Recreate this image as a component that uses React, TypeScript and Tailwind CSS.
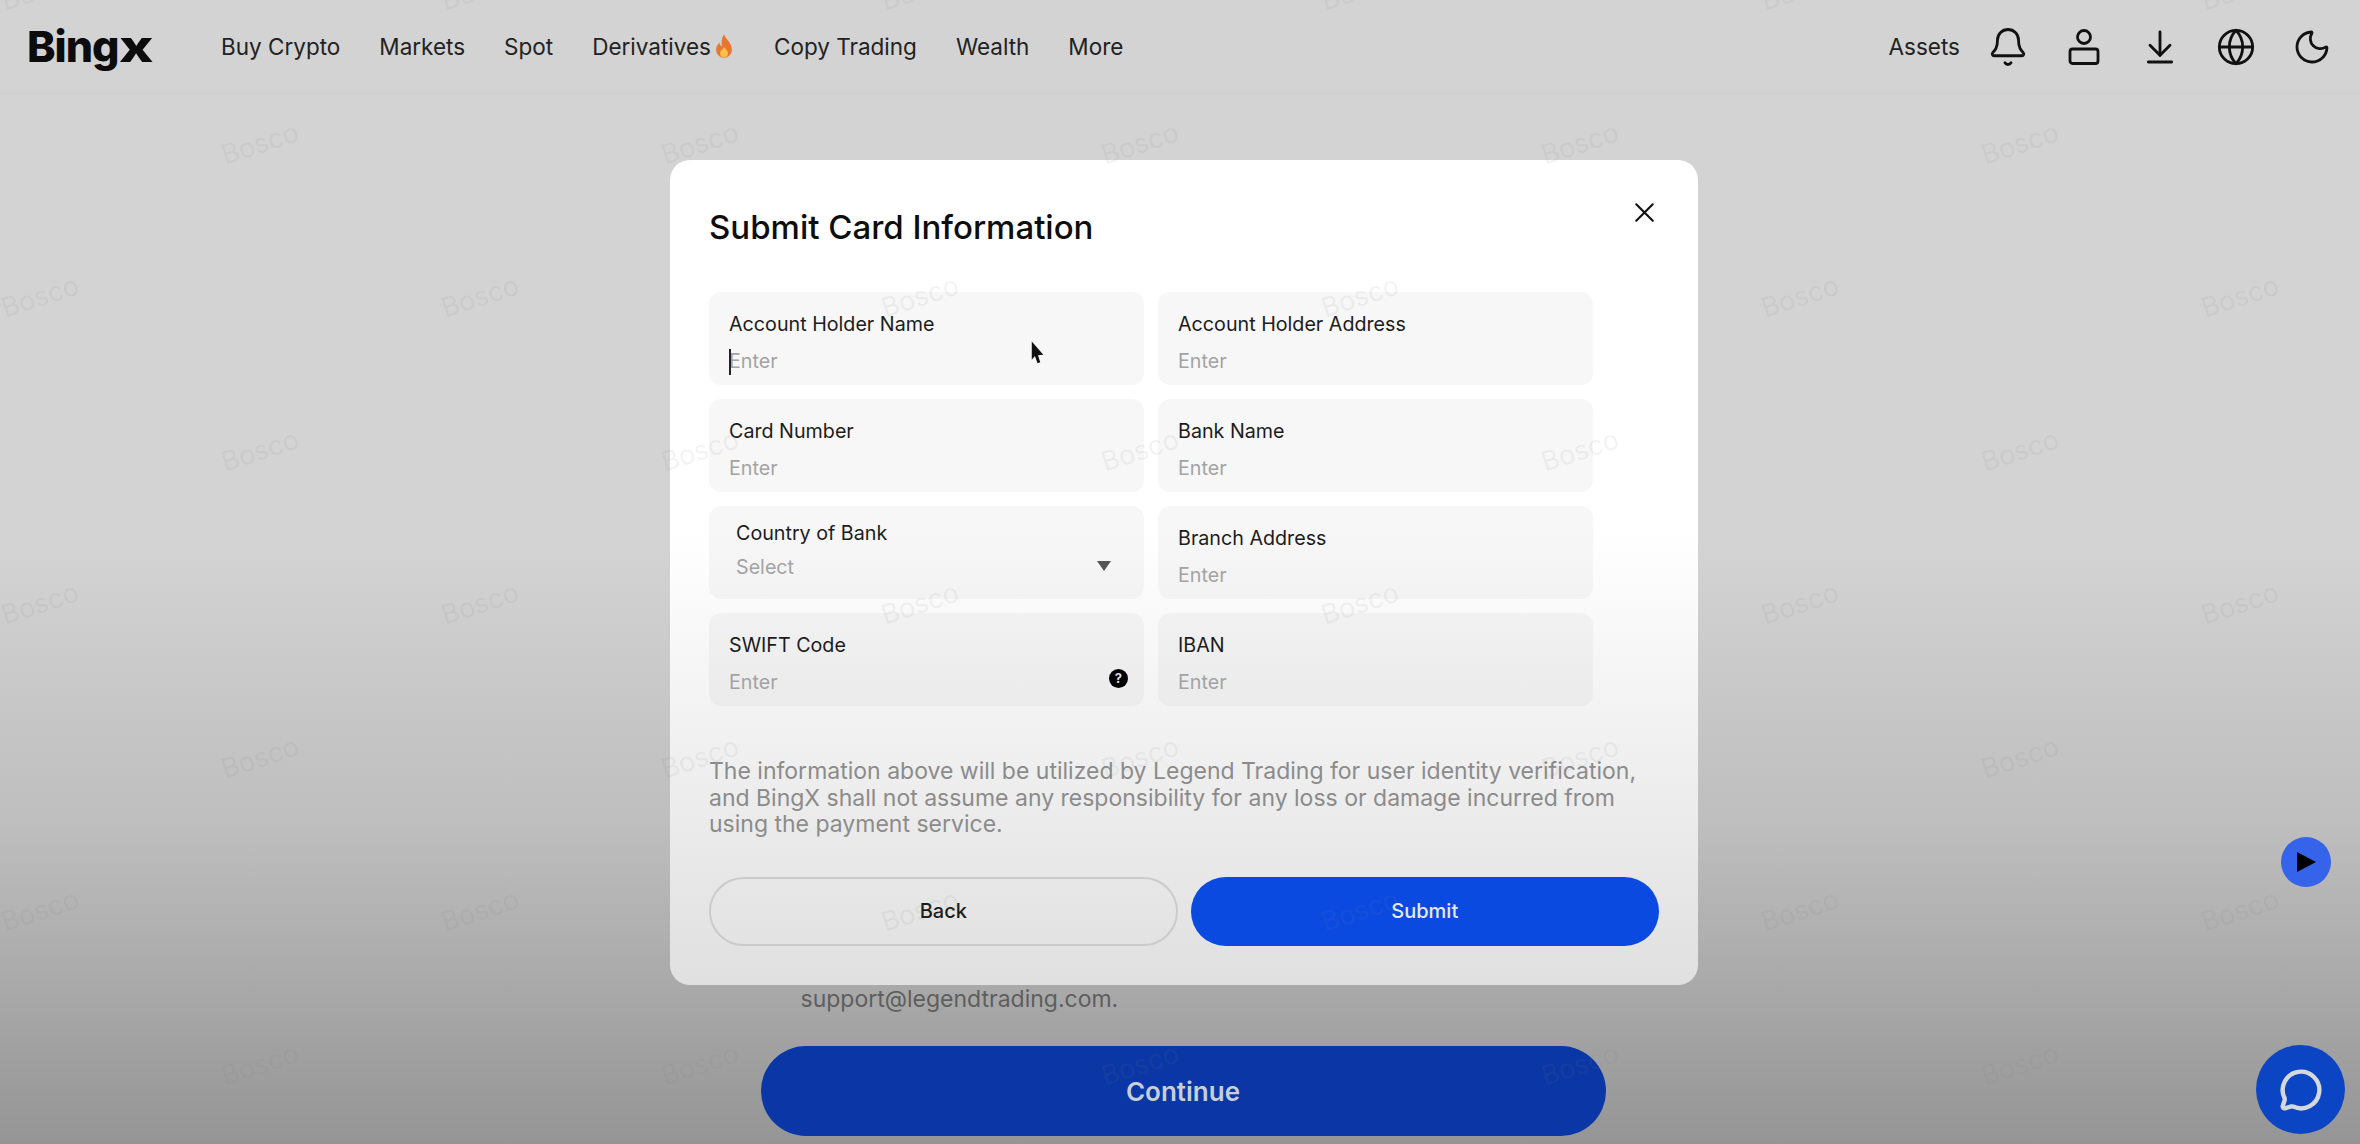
import { ArrowDownToLine, Bell, Globe, MessageCircle, Moon, X } from "lucide-react";

const navItems = ["Buy Crypto", "Markets", "Spot", "Derivatives", "Copy Trading", "Wealth", "More"];

// 水印：错位排布，横向 440 一组，纵向 153.5 一行
const watermarks: { left: number; top: number }[] = [];
for (let row = 0; row < 8; row++) {
  const odd = row % 2 === 1;
  for (let col = 0; col < 6; col++) {
    watermarks.push({ left: (odd ? 220 : 0) + col * 440, top: -24 + row * 153.5 });
  }
}

function Flame() {
  return (
    <svg width="22" height="27" viewBox="0 0 18 24">
      <path d="M9 1c1 4 7 7 7 14a7 7 0 0 1-14 0c0-3 1.500-5 3-6.500 0 2 .8 3 2 3.500C6.500 8 7 4 9 1z" fill="#e8772e" />
      <path d="M9 12c.5 2 3.500 3 3.500 6a3.500 3.500 0 0 1-7 0c0-2.500 3-3.500 3.500-6z" fill="#f7c04a" />
    </svg>
  );
}

function UserIcon() {
  return (
    <svg width="34" height="38" viewBox="0 0 34 38" fill="none" stroke="#111" strokeWidth="2.8">
      <circle cx="17" cy="9" r="6.500" />
      <rect x="3" y="21" width="28" height="14.500" rx="2.500" />
    </svg>
  );
}

function Field({ label, help }: { label: string; help?: boolean }) {
  return (
    <div className="relative h-[93px] rounded-xl bg-black/[0.03] pl-5 pt-[19px]">
      <div className="text-[19.700px] leading-[26px] text-[#1c1c1c]">{label}</div>
      <div className="mt-[11px] text-[19.700px] leading-[26px] text-[#a3a3a3]">Enter</div>
      {help && (
        <span className="absolute right-4 top-[56px] flex h-[19px] w-[19px] items-center justify-center rounded-full bg-black text-[13px] font-bold text-[#ddd]">
          ?
        </span>
      )}
    </div>
  );
}

export default function App() {
  return (
    <div className="relative flex h-[1144px] w-[2360px] flex-col overflow-hidden bg-[linear-gradient(to_bottom,#d3d3d3_48%,#bebebe_72%,#a8a8a8_87%,#959595_100%)] font-['Inter','Liberation_Sans',sans-serif]">
      {/* Header */}
      <header className="flex h-[94px] shrink-0 items-center border-b border-[#cecece] pl-[27px] pr-[27px]">
        <span className="mr-[66px] w-[128px] whitespace-nowrap text-[43px] font-extrabold leading-none tracking-[-1px] text-[#0c0c0c]">
          Bing<span className="inline-block origin-left scale-x-[1.35]">x</span>
        </span>
        <nav className="flex items-center gap-[39px] text-[22.500px] text-[#222]">
          {navItems.map((item) => (
            <span key={item} className="flex items-center gap-0.5">
              {item}
              {item === "Derivatives" && <Flame />}
            </span>
          ))}
        </nav>
        <div className="ml-auto flex items-center gap-[34px] text-[#111]">
          <span className="-mr-[7px] text-[22.500px] text-[#222]">Assets</span>
          <span className="flex w-[42px] justify-center"><Bell size={42} strokeWidth={1.6} /></span>
          <span className="flex w-[42px] justify-center"><UserIcon /></span>
          <span className="flex w-[42px] justify-center"><ArrowDownToLine size={40} strokeWidth={1.7} /></span>
          <span className="flex w-[42px] justify-center"><Globe size={40} strokeWidth={1.7} /></span>
          <span className="flex w-[42px] justify-center"><Moon size={40} strokeWidth={1.7} /></span>
        </div>
      </header>

      {/* Page behind the modal */}
      <main className="flex flex-1 flex-col items-center justify-end pb-2 pl-[6px]">
        <div className="w-[845px]">
          <p className="mb-[33px] pl-10 text-[23px] leading-[28px] text-[#5e5e5e]">support@legendtrading.com.</p>
          <button className="h-[90px] w-full rounded-full bg-[#0a37a5] text-[26px] font-semibold text-[#c9ced9]">Continue</button>
        </div>
      </main>

      {/* Modal */}
      <div className="absolute left-[670px] top-[160px] h-[825px] w-[1028px] rounded-[20px] bg-gradient-to-b from-white from-45% to-[#e0e0e0] px-[39px]">
        <h2 className="pt-[47px] text-[33px] font-medium leading-10 text-[#0d0d0d]">Submit Card Information</h2>
        <button className="absolute right-[37px] top-[36px] text-[#111]">
          <X size={33} strokeWidth={1.5} />
        </button>

        <div className="mt-[45px] grid w-[884px] grid-cols-2 gap-x-[14px] gap-y-[14px]">
          <div className="relative">
            <Field label="Account Holder Name" />
            <span className="absolute left-5 top-[57px] h-[26px] w-[2px] bg-[#222]" />
            <svg width="16" height="26" viewBox="0 0 18 28" className="absolute left-[321px] top-[48px]">
              <path d="M2 1l13 15-6 .5 2.500 8-3 1-3-8-3.500 4z" fill="#111" />
            </svg>
          </div>
          <Field label="Account Holder Address" />
          <Field label="Card Number" />
          <Field label="Bank Name" />
          <div className="relative h-[93px] rounded-xl bg-black/[0.03] pl-[27px] pt-[14px]">
            <div className="text-[19.700px] leading-[26px] text-[#1c1c1c]">Country of Bank</div>
            <div className="mt-[8px] text-[19.700px] leading-[26px] text-[#a3a3a3]">Select</div>
            <svg width="14" height="10" viewBox="0 0 14 10" className="absolute right-[33px] top-[55px]">
              <path d="M0 0h14L7 10z" fill="#555" />
            </svg>
          </div>
          <Field label="Branch Address" />
          <Field label="SWIFT Code" help />
          <Field label="IBAN" />
        </div>

        <p className="mt-[52px] text-[23px] leading-[26.500px] text-[#8b8b8b]">
          The information above will be utilized by Legend Trading for user identity verification, and BingX shall not assume any responsibility for any loss or damage incurred from using the payment service.
        </p>

        <div className="mt-[39px] grid grid-cols-2 gap-[13px]">
          <button className="h-[69px] rounded-full border-2 border-[#cbcbcb] text-[20px] font-medium text-[#1c1c1c]">Back</button>
          <button className="h-[69px] rounded-full bg-[#0a4ae0] text-[20px] font-medium text-[#e8e8e8]">Submit</button>
        </div>
      </div>

      {/* Floating buttons */}
      <button className="absolute left-[2281px] top-[837px] flex h-[50px] w-[50px] items-center justify-center rounded-full bg-[#3563ea]">
        <svg width="22" height="22" viewBox="0 0 22 22"><path d="M2 1l19 10L2 21z" fill="#000" strokeLinejoin="round" /></svg>
      </button>
      <button className="absolute left-[2256px] top-[1045px] flex h-[89px] w-[89px] items-center justify-center rounded-full bg-[#0b45c4] text-[#d5d8de]">
        <MessageCircle size={44} strokeWidth={2.4} />
      </button>

      {/* Watermark */}
      <div className="pointer-events-none absolute inset-0">
        {watermarks.map((w) => (
          <span
            key={`${w.left}-${w.top}`}
            className="absolute -rotate-[18deg] text-[27px] leading-none text-[#808080]/10"
            style={{ left: w.left, top: w.top }}
          >
            Bosco
          </span>
        ))}
      </div>
    </div>
  );
}
